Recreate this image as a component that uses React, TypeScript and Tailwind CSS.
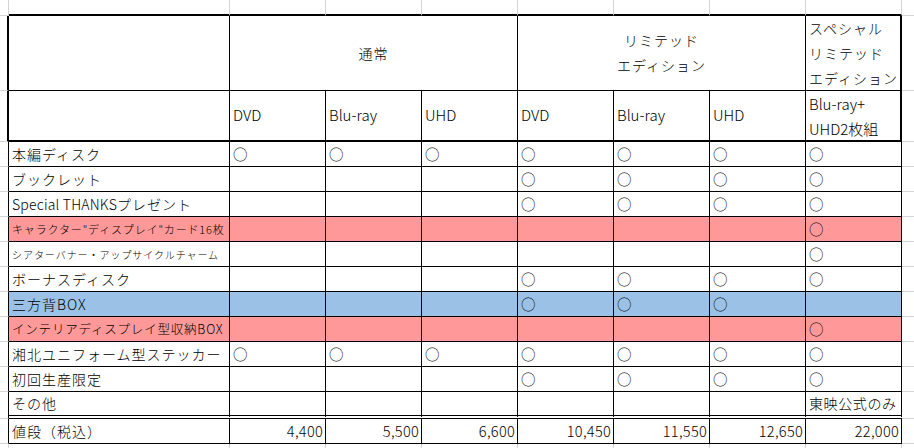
import React from 'react';

type Row = {
  label: React.ReactNode;
  labelClass?: string;
  bg?: string;
  marks: number[];
  note?: string;
};

const rows: Row[] = [
  { label: '本編ディスク', marks: [1, 1, 1, 1, 1, 1, 1] },
  { label: 'ブックレット', marks: [0, 0, 0, 1, 1, 1, 1] },
  {
    label: (
      <>
        <span className="tracking-[0.2px]">Special THANKS</span>プレゼント
      </>
    ),
    marks: [0, 0, 0, 1, 1, 1, 1],
  },
  {
    label: 'キャラクター"ディスプレイ"カード16枚',
    labelClass: 'text-[11px] tracking-[0.85px]',
    bg: 'bg-[#ff9999]',
    marks: [0, 0, 0, 0, 0, 0, 1],
  },
  {
    label: 'シアターバナー・アップサイクルチャーム',
    labelClass: 'text-[10px] tracking-[0.95px]',
    marks: [0, 0, 0, 0, 0, 0, 1],
  },
  { label: 'ボーナスディスク', marks: [0, 0, 0, 1, 1, 1, 1] },
  { label: '三方背BOX', bg: 'bg-[#9bc2e6]', marks: [0, 0, 0, 1, 1, 1, 0] },
  {
    label: 'インテリアディスプレイ型収納BOX',
    labelClass: 'text-[12.5px] tracking-[0.8px]',
    bg: 'bg-[#ff9999]',
    marks: [0, 0, 0, 0, 0, 0, 1],
  },
  { label: '湘北ユニフォーム型ステッカー', marks: [1, 1, 1, 1, 1, 1, 1] },
  { label: '初回生産限定', marks: [0, 0, 0, 1, 1, 1, 1] },
  { label: 'その他', marks: [0, 0, 0, 0, 0, 0, 0], note: '東映公式のみ' },
];

const prices = ['4,400', '5,500', '6,600', '10,450', '11,550', '12,650', '22,000'];
const formats = ['DVD', 'Blu-ray', 'UHD', 'DVD', 'Blu-ray', 'UHD'];

const App: React.FC = () => {
  return (
    <div className="h-[448px] w-[914px] overflow-hidden bg-white font-['Noto_Sans_CJK_JP',sans-serif] font-light text-black">
      <div className="grid h-full grid-cols-[9px_221px_repeat(7,96px)_1fr] grid-rows-[16px_75px_51px_repeat(10,25px)_27px_25px_1fr]">
        {/* top strip of gridlines */}
        <div className="border-r border-b border-[#d4d4d4]" />
        {[0, 1, 2, 3, 4, 5, 6, 7].map((i) => (
          <div key={i} className="border-r border-[#d4d4d4] border-b-2 border-b-black" />
        ))}
        <div className="border-b border-[#d4d4d4]" />

        {/* header row 1 */}
        <div className="border-r-2 border-r-black border-b border-b-[#d4d4d4]" />
        <div className="border-r border-b border-black" />
        <div className="col-span-3 flex items-center justify-center border-r border-b border-black text-[14px] tracking-[1px]">
          通常
        </div>
        <div className="col-span-3 flex flex-col items-center justify-center border-r border-b border-black text-[14px] leading-[25px] tracking-[1px]">
          <span>リミテッド</span>
          <span>エディション</span>
        </div>
        <div className="flex flex-col justify-center border-r-2 border-b border-black pl-[3px] text-[14px] leading-[25px] tracking-[1px]">
          <span>スペシャル</span>
          <span>リミテッド</span>
          <span>エディション</span>
        </div>
        <div className="border-b border-[#d4d4d4]" />

        {/* header row 2 */}
        <div className="border-r-2 border-r-black border-b border-b-[#d4d4d4]" />
        <div className="border-r border-b-2 border-black" />
        {formats.map((f, i) => (
          <div key={i} className="flex items-center border-r border-b-2 border-black pl-[3px] text-[15px]">
            {f}
          </div>
        ))}
        <div className="flex flex-col justify-center border-r-2 border-b-2 border-black pl-[3px] text-[15px] leading-[25px]">
          <span>Blu-ray+</span>
          <span>UHD2枚組</span>
        </div>
        <div className="border-b border-[#d4d4d4]" />

        {/* item rows */}
        {rows.map((row, r) => {
          const last = r === rows.length - 1;
          const bottom = last ? 'border-b-4 border-double border-b-black' : 'border-b border-b-black';
          return (
            <React.Fragment key={r}>
              <div className="border-r border-r-black border-b border-b-[#d4d4d4]" />
              <div
                className={`flex items-center overflow-hidden whitespace-nowrap border-r border-r-black pl-[3px] ${bottom} ${row.bg ?? ''} ${row.labelClass ?? 'text-[14px] tracking-[1px]'}`}
              >
                {row.label}
              </div>
              {row.marks.map((m, c) => (
                <div
                  key={c}
                  className={`flex items-center border-r border-r-black pl-[3px] text-[14.5px] ${bottom} ${row.bg ?? ''}`}
                >
                  {m ? '○' : c === 6 && row.note ? <span className="text-[14px] tracking-[0.6px]">{row.note}</span> : null}
                </div>
              ))}
              <div className="border-b border-b-[#d4d4d4]" />
            </React.Fragment>
          );
        })}

        {/* price row */}
        <div className="border-r border-r-black border-b border-b-[#d4d4d4]" />
        <div className="flex items-center border-r border-b border-black pl-[3px] text-[14px] tracking-[1px]">
          値段（税込）
        </div>
        {prices.map((p, i) => (
          <div
            key={i}
            className="flex items-center justify-end border-r border-b border-black pr-[2px] text-[14.5px] tracking-[0.3px]"
          >
            {p}
          </div>
        ))}
        <div className="border-b border-b-[#d4d4d4]" />

        {/* bottom strip of gridlines */}
        {[0, 1, 2, 3, 4, 5, 6, 7, 8].map((i) => (
          <div key={i} className="border-r border-[#d4d4d4]" />
        ))}
        <div />
      </div>
    </div>
  );
};

export default App;
